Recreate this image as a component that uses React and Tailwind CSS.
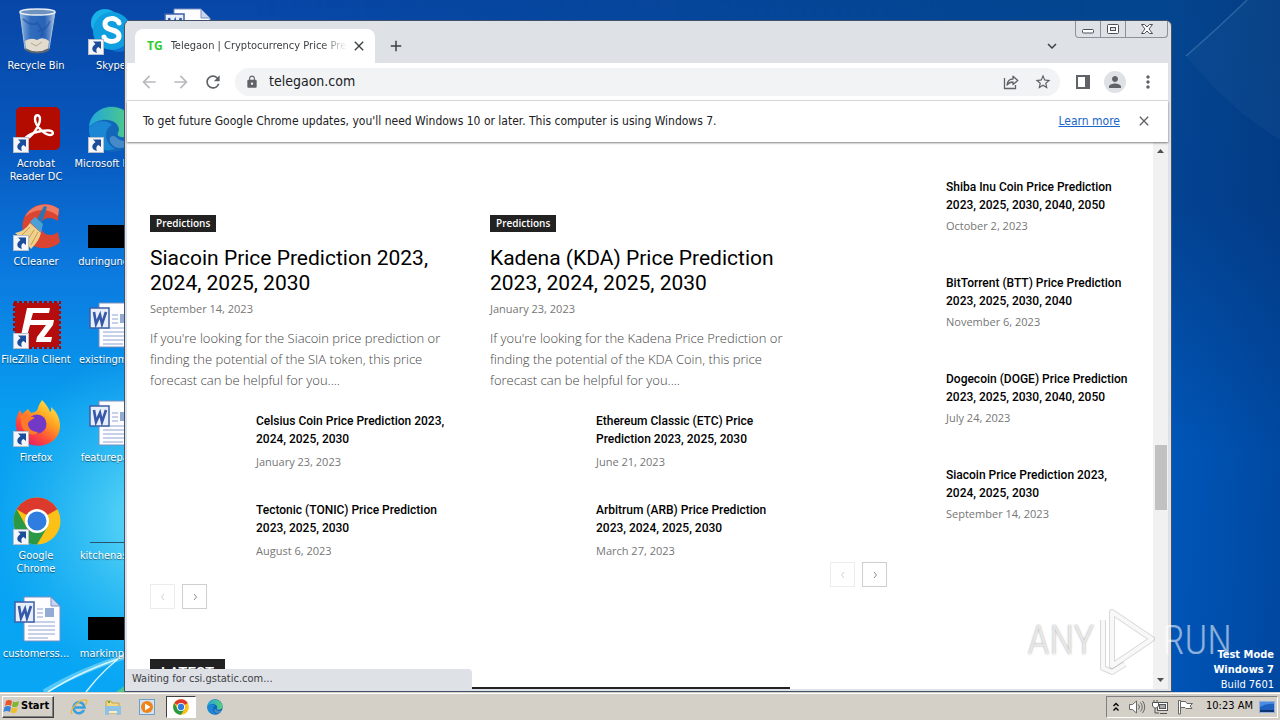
import React from 'react';
import {
  MdAdd,
  MdArrowBack,
  MdArrowForward,
  MdClose,
  MdExpandMore,
  MdLock,
  MdMoreVert,
  MdPerson,
  MdRefresh,
  MdStarBorder,
} from 'react-icons/md';

// --- DATA ---
const featured = [
  {
    title: 'Siacoin Price Prediction 2023, 2024, 2025, 2030',
    date: 'September 14, 2023',
    excerpt:
      "If you're looking for the Siacoin price prediction or finding the potential of the SIA token, this price forecast can be helpful for you....",
    related: [
      { title: 'Celsius Coin Price Prediction 2023, 2024, 2025, 2030', date: 'January 23, 2023' },
      { title: 'Tectonic (TONIC) Price Prediction 2023, 2025, 2030', date: 'August 6, 2023' },
    ],
  },
  {
    title: 'Kadena (KDA) Price Prediction 2023, 2024, 2025, 2030',
    date: 'January 23, 2023',
    excerpt:
      "If you're looking for the Kadena Price Prediction or finding the potential of the KDA Coin, this price forecast can be helpful for you....",
    related: [
      { title: 'Ethereum Classic (ETC) Price Prediction 2023, 2025, 2030', date: 'June 21, 2023' },
      { title: 'Arbitrum (ARB) Price Prediction 2023, 2024, 2025, 2030', date: 'March 27, 2023' },
    ],
  },
];

const sidebarPosts = [
  { title: 'Shiba Inu Coin Price Prediction 2023, 2025, 2030, 2040, 2050', date: 'October 2, 2023' },
  { title: 'BitTorrent (BTT) Price Prediction 2023, 2025, 2030, 2040', date: 'November 6, 2023' },
  { title: 'Dogecoin (DOGE) Price Prediction 2023, 2025, 2030, 2040, 2050', date: 'July 24, 2023' },
  { title: 'Siacoin Price Prediction 2023, 2024, 2025, 2030', date: 'September 14, 2023' },
];

// --- DESKTOP ICONS ---
function RecycleBinIcon() {
  return (
    <svg viewBox="0 0 48 48" className="h-12 w-12">
      <defs>
        <linearGradient id="bin" x1="0" x2="1">
          <stop offset="0" stopColor="#b9d3ee" stopOpacity=".85" />
          <stop offset=".3" stopColor="#4d83c9" stopOpacity=".6" />
          <stop offset=".7" stopColor="#3f74be" stopOpacity=".6" />
          <stop offset="1" stopColor="#c6d8ea" stopOpacity=".9" />
        </linearGradient>
      </defs>
      <path d="M7 5 L12 42 Q24 49 36 42 L42 5 Z" fill="url(#bin)" stroke="#a9bfd8" strokeWidth="1" />
      <path d="M12 34 q6 -4 12 -1 q6 -4 12 1 l-1 8 q-11 6 -22 0 z" fill="#e2dccf" />
      <path d="M12 41 Q24 48 36 41 L36 44 Q24 49 13 44 Z" fill="#5d6670" />
      <path d="M18 36 l5 3 l6 -4" stroke="#b9a98d" fill="none" />
      <path d="M10 12 q9 8 14 4 q8 8 4 14 M37 14 q-4 10 -12 10" fill="none" stroke="#1c52a8" strokeWidth="2" opacity=".6" />
      <ellipse cx="24.500" cy="5" rx="17.500" ry="3" fill="#6f93be" stroke="#e7eef5" strokeWidth="1.500" />
    </svg>
  );
}

function AcrobatIcon() {
  return (
    <svg viewBox="0 0 48 48" className="h-12 w-12">
      <rect x="3" y="2" width="44" height="43" rx="5" fill="#b30b00" />
      <path
        d="M12 34 C19 33 27 20 27 14 C27 9 22 9 22 14 C22 21 32 30 37 30 C41 30 41 26 36 25.500 C28 25 14 29 12 34 Z"
        fill="none"
        stroke="#fff"
        strokeWidth="2.400"
        strokeLinejoin="round"
      />
    </svg>
  );
}

function CCleanerIcon() {
  return (
    <svg viewBox="0 0 48 48" className="h-12 w-12">
      <path
        d="M46 6 C34 -3 15 1 10 18 C7 33 16 45 31 45 C38 45 43 43 47 39 L45 29 C40 34 29 33 28 24 C27 15 37 12 45 18 Z"
        fill="#db4430"
      />
      <path d="M46 6 C34 -3 17 2 12 14 C22 5 35 5 45 13 Z" fill="#ef7a63" />
      <path d="M31 3 L34 4 L28 22 L22 20 Z" fill="#2876b4" />
      <path d="M17 19 L22 14 L30 21 L28 30 Z" fill="#4ba0d6" />
      <path d="M17 20 L28 30 Q26 38 18 46 Q10 36 2 30 Q12 28 17 20 Z" fill="#efd08d" />
      <path d="M17 24 L9 32 M21 27 L14 38 M25 29 L18 42" stroke="#c99b4b" />
    </svg>
  );
}

function FileZillaIcon() {
  return (
    <svg viewBox="0 0 48 48" className="h-12 w-12">
      <rect x="2" y="2" width="44" height="44" fill="#b50d0d" />
      <rect x="1" y="1" width="46" height="46" fill="none" stroke="#a20808" strokeWidth="2" strokeDasharray="3 2" />
      <path d="M14 7 H37 L36 12 H20 L18 19 H29 L28 24 H17 L13 39 H7 Z" fill="#fff" />
      <path d="M24 19 H41 L40 24 L31 36 H39 L38 41 H23 L24 36 L33 24 H23 Z" fill="#fff" />
    </svg>
  );
}

function FirefoxIcon() {
  return (
    <svg viewBox="0 0 48 48" className="h-12 w-12">
      <defs>
        <linearGradient id="fox" x1=".9" y1="0" x2=".2" y2="1">
          <stop offset="0" stopColor="#fff44f" />
          <stop offset=".4" stopColor="#ffa01f" />
          <stop offset=".7" stopColor="#ff4a3c" />
          <stop offset="1" stopColor="#e01470" />
        </linearGradient>
      </defs>
      <path
        d="M29 1 C34 6 36 10 37 13 C39 12 38 9 38 8 C49 17 50 33 41 41 C31 50 14 48 7 38 C0 28 3 17 7 11 L9 15 L15 10 L18 14 C23 13 24 12 25 9 C26 5 28 3 29 1 Z"
        fill="url(#fox)"
      />
      <circle cx="24" cy="25" r="9.500" fill="#7139c6" />
      <path d="M7 17 C11 15 15 18 21 18 C23 20 15 21 15 25 C15 30 20 33 25 33 C22 38 12 35 9 28 Z" fill="#ff7a28" />
    </svg>
  );
}

function ChromeLogo({ className }) {
  return (
    <svg viewBox="0 0 48 48" className={className}>
      <circle cx="24" cy="24" r="23.500" fill="#fbc116" />
      <path d="M24 24 L3.600 12.300 A23.500 23.500 0 0 1 44.400 12.300 Z" fill="#dc3a2c" />
      <path d="M3.600 12.300 A23.500 23.500 0 0 0 24 47.500 L34.400 30 L24 34 L13.600 30 Z" fill="#2b9846" />
      <circle cx="24" cy="24" r="12" fill="#fff" />
      <circle cx="24" cy="24" r="9.500" fill="#2f7de1" />
    </svg>
  );
}

function SkypeIcon() {
  return (
    <svg viewBox="0 0 48 48" className="h-12 w-12">
      <circle cx="17" cy="16" r="14" fill="#18b2e8" />
      <circle cx="31" cy="32" r="13" fill="#0a6fd0" />
      <circle cx="24" cy="24" r="19" fill="#0f9fe0" />
      <path
        d="M31 16 C29 10 17 10 17 17 C17 25 31 21 31 29 C31 36 18 36 16 30"
        fill="none"
        stroke="#fff"
        strokeWidth="5"
        strokeLinecap="round"
      />
    </svg>
  );
}

function EdgeLogo({ className }) {
  return (
    <svg viewBox="0 0 48 48" className={className}>
      <defs>
        <linearGradient id="edge" x1="0" x2="1">
          <stop offset="0" stopColor="#22a5dd" />
          <stop offset="1" stopColor="#55d178" />
        </linearGradient>
      </defs>
      <circle cx="24" cy="24" r="23" fill="#1267b8" />
      <path d="M1 22 C3 -2 38 -6 46 18 C49 28 40 33 33 32 C28 31 30 28 31 25 C31 14 12 10 1 22 Z" fill="url(#edge)" />
      <path d="M1 23 C8 14 20 15 24 20 C16 24 15 37 27 44 C12 49 0 37 1 23 Z" fill="#1b86d4" />
      <path d="M46 33 C40 37 32 37 28 32 C22 28 18 36 27 42 C35 45 43 40 46 33 Z" fill="#e9f4fb" opacity=".25" />
    </svg>
  );
}

function WordDocIcon() {
  return (
    <svg viewBox="0 0 48 48" className="h-12 w-12">
      <path d="M11 2 H38 L47 11 V46 H11 Z" fill="#fdfdff" stroke="#7b8fc0" />
      <path d="M38 2 V11 H47 Z" fill="#c9d5ee" stroke="#7b8fc0" />
      <path d="M24 14 H30 M24 18 H30 M24 22 H30 M15 27 H42 M15 31 H42 M15 35 H42 M15 39 H42 M15 43 H35" stroke="#8fa3d3" />
      <rect x="32" y="13" width="9" height="9" fill="#93abd3" />
      <rect x="2" y="7" width="19" height="20" fill="#e8effa" stroke="#3d5fa8" strokeWidth="1.500" />
      <path d="M6 11 L8 23 L12 14 L14 23 L18 11" fill="none" stroke="#3559a8" strokeWidth="2.600" />
    </svg>
  );
}

function BlackThumb() {
  return (
    <svg viewBox="0 0 48 48" className="h-12 w-12">
      <rect x="0" y="22" width="48" height="23" fill="#000" />
    </svg>
  );
}

function LineThumb() {
  return (
    <svg viewBox="0 0 48 48" className="h-12 w-12">
      <path d="M2 45.500 H48" stroke="#27566b" />
    </svg>
  );
}

function ShortcutArrow() {
  return (
    <svg viewBox="0 0 16 16" className="absolute bottom-0 left-0 h-4 w-4">
      <rect x=".5" y=".5" width="15" height="15" fill="#f4f6f9" stroke="#b8bec8" />
      <path d="M5 2.500 H13 V10 L10.500 8 C8 9 8 11.500 9 14 C3 12.500 3 8 7.500 5 Z" fill="#1b4d9b" />
    </svg>
  );
}

const desktopIcons = [
  { label: 'Recycle Bin', icon: <RecycleBinIcon /> },
  { label: 'Acrobat Reader DC', icon: <AcrobatIcon />, shortcut: true },
  { label: 'CCleaner', icon: <CCleanerIcon />, shortcut: true },
  { label: 'FileZilla Client', icon: <FileZillaIcon />, shortcut: true },
  { label: 'Firefox', icon: <FirefoxIcon />, shortcut: true },
  { label: 'Google Chrome', icon: <ChromeLogo className="h-12 w-12" />, shortcut: true },
  { label: 'customerss...', icon: <WordDocIcon /> },
  { label: 'Skype', icon: <SkypeIcon />, shortcut: true },
  { label: 'Microsoft\u00a0Edge', icon: <EdgeLogo className="h-12 w-12" />, shortcut: true },
  { label: 'duringunca...', icon: <BlackThumb /> },
  { label: 'existingma...', icon: <WordDocIcon /> },
  { label: 'featurepar...', icon: <WordDocIcon /> },
  { label: 'kitchenass...', icon: <LineThumb /> },
  { label: 'markimple...', icon: <BlackThumb /> },
  { label: '', icon: <WordDocIcon /> },
];

function Wallpaper() {
  return (
    <svg className="absolute inset-0 h-full w-full" viewBox="0 0 1280 692" preserveAspectRatio="none" aria-hidden="true">
      <defs>
        <linearGradient id="sky" x1="0" y1="0" x2="0" y2="1">
          <stop offset="0" stopColor="#0846a6" />
          <stop offset=".2" stopColor="#0757bd" />
          <stop offset=".4" stopColor="#0b7be0" />
          <stop offset=".6" stopColor="#089ff0" />
          <stop offset="1" stopColor="#08a6f4" />
        </linearGradient>
        <linearGradient id="east" x1="0" y1="0" x2="0" y2="1">
          <stop offset="0" stopColor="#04458f" />
          <stop offset=".3" stopColor="#034393" />
          <stop offset=".65" stopColor="#0056b8" />
          <stop offset="1" stopColor="#0054b6" />
        </linearGradient>
        <linearGradient id="fade" x1="0" x2="1">
          <stop offset=".2" stopColor="#fff" stopOpacity="0" />
          <stop offset=".85" stopColor="#fff" />
        </linearGradient>
        <mask id="eastMask">
          <rect width="1280" height="692" fill="url(#fade)" />
        </mask>
        <radialGradient id="glow" gradientUnits="userSpaceOnUse" cx="160" cy="520" r="170">
          <stop offset="0" stopColor="#6ee2f6" />
          <stop offset="1" stopColor="#3cc6f4" stopOpacity="0" />
        </radialGradient>
        <linearGradient id="edgeShade" gradientUnits="userSpaceOnUse" x1="1172" y1="0" x2="1280" y2="0">
          <stop offset="0" stopColor="#00235e" stopOpacity="0" />
          <stop offset="1" stopColor="#00235e" stopOpacity=".25" />
        </linearGradient>
      </defs>
      <rect width="1280" height="692" fill="url(#sky)" />
      <rect width="1280" height="692" fill="url(#east)" mask="url(#eastMask)" />
      <rect width="340" height="692" fill="url(#glow)" />
      <rect x="1172" width="108" height="692" fill="url(#edgeShade)" />
      <path d="M1186 56 Q1216 30 1247 0 H1280 V140 Q1230 110 1186 56 Z" fill="#5b8fb0" opacity=".08" />
      <path d="M1186 56 Q1216 30 1247 0" fill="none" stroke="#7fb0dc" strokeWidth="1.500" opacity=".3" />
      <path d="M44 692 Q80 670 130 655" fill="none" stroke="#9fe9fb" strokeWidth="5" opacity=".5" />
      <path d="M48 692 Q82 670 130 655 M86 692 Q104 668 130 650" fill="none" stroke="#e6fbff" strokeWidth="1.500" opacity=".9" />
      <path d="M116 692 L130 682 V692 Z" fill="#4fc68c" />
    </svg>
  );
}

function DesktopIcon({ item }) {
  return (
    <button type="button" className="flex h-[98px] w-[72px] flex-col items-center pt-[7px]">
      <span className="relative ml-[2px] block h-12 w-12">
        {item.icon}
        {item.shortcut && <ShortcutArrow />}
      </span>
      <span className="mt-1 text-center text-[11px] leading-[13px] text-white [text-shadow:0_1px_1px_rgba(0,0,0,0.5)]">
        {item.label}
      </span>
    </button>
  );
}

// --- BROWSER ---
function WindowControls() {
  return (
    <div className="flex h-[17px] rounded-b border border-t-0 border-[#8d9199] text-[#4b4f58]">
      <button type="button" aria-label="Minimize" className="flex w-[25px] items-center justify-center border-r border-[#8d9199]">
        <svg viewBox="0 0 14 10" className="h-[10px] w-[14px]">
          <rect x="1.500" y="5.500" width="11" height="3.500" rx="1" fill="#fff" stroke="currentColor" />
        </svg>
      </button>
      <button type="button" aria-label="Maximize" className="flex w-[25px] items-center justify-center border-r border-[#8d9199]">
        <svg viewBox="0 0 12 10" className="h-[10px] w-[12px]">
          <rect x=".5" y=".5" width="11" height="9" rx="1" fill="#fff" stroke="currentColor" />
          <rect x="3.500" y="3.500" width="5" height="3" fill="#dee1e6" stroke="currentColor" />
        </svg>
      </button>
      <button type="button" aria-label="Close" className="flex w-[41px] items-center justify-center">
        <svg viewBox="0 0 12 10" className="h-[10px] w-[12px]">
          <path
            d="M.5 .5 H3.500 L6 3 L8.500 .5 H11.500 L8 5 L11.500 9.500 H8.500 L6 7 L3.500 9.500 H.5 L4 5 Z"
            fill="#fff"
            stroke="currentColor"
          />
        </svg>
      </button>
    </div>
  );
}

function TabStrip() {
  return (
    <div className="flex h-[42px] items-start bg-[#dee1e6]">
      <div className="mt-2 ml-2 flex h-[34px] w-60 items-center rounded-t-lg bg-white pr-2 pl-3">
        <span className="font-['Open_Sans',sans-serif] text-[12px] font-bold text-[#2fcc2f]">TG</span>
        <span className="ml-2 flex-1 overflow-hidden text-[11px] whitespace-nowrap text-[#3c4043] [mask-image:linear-gradient(to_right,black_85%,transparent)]">
          Telegaon | Cryptocurrency Price Prediction
        </span>
        <button type="button" aria-label="Close tab" className="ml-1 text-[#3c4043]">
          <MdClose className="h-4 w-4" />
        </button>
      </div>
      <button type="button" aria-label="New tab" className="mt-4 ml-3 text-[#3c4043]">
        <MdAdd className="h-[18px] w-[18px]" />
      </button>
      <div className="flex-1" />
      <button type="button" aria-label="Search tabs" className="mt-4 mr-[14px] text-[#3c4043]">
        <MdExpandMore className="h-[18px] w-[18px]" />
      </button>
      <WindowControls />
    </div>
  );
}

function Toolbar() {
  return (
    <div className="flex h-[38px] items-center border-b border-[#dcdde0] bg-white pr-[10px] pl-3 text-[#5f6368]">
      <button type="button" aria-label="Back" className="text-[#b9bbbe]">
        <MdArrowBack className="h-5 w-5" />
      </button>
      <button type="button" aria-label="Forward" className="ml-3 text-[#b9bbbe]">
        <MdArrowForward className="h-5 w-5" />
      </button>
      <button type="button" aria-label="Reload" className="ml-3">
        <MdRefresh className="h-5 w-5" />
      </button>
      <div className="ml-3 flex h-7 flex-1 items-center rounded-full bg-[#f1f3f4] pr-2 pl-[10px]">
        <MdLock className="h-[14px] w-[14px]" />
        <input
          type="text"
          aria-label="Address"
          defaultValue="telegaon.com"
          className="ml-[10px] min-w-0 flex-1 bg-transparent text-[14px] text-[#202124] outline-none"
        />
        <button type="button" aria-label="Share this page">
          <svg viewBox="0 0 18 18" className="h-[18px] w-[18px]" fill="none" stroke="currentColor" strokeWidth="1.300">
            <path d="M2.500 5 V15.500 H13.500 V12" />
            <path d="M5 12 C5.500 8 8 6 11 6 V3.200 L15.800 7.500 L11 11.500 V9 C8.500 9 6.500 10 5 12 Z" strokeLinejoin="round" />
          </svg>
        </button>
        <button type="button" aria-label="Bookmark this tab" className="ml-[14px]">
          <MdStarBorder className="h-[18px] w-[18px]" />
        </button>
      </div>
      <button type="button" aria-label="Side panel" className="ml-4">
        <svg viewBox="0 0 14 14" className="h-[14px] w-[14px]">
          <rect x="1" y="1" width="12" height="12" fill="#fff" stroke="currentColor" strokeWidth="2" />
          <rect x="9" y="1" width="4" height="12" fill="currentColor" />
        </svg>
      </button>
      <button type="button" aria-label="Profile" className="ml-[14px] flex h-[22px] w-[22px] items-center justify-center rounded-full bg-[#dee1e6]">
        <MdPerson className="h-[18px] w-[18px]" />
      </button>
      <button type="button" aria-label="Menu" className="ml-3">
        <MdMoreVert className="h-5 w-5" />
      </button>
    </div>
  );
}

function InfoBar() {
  return (
    <div className="relative z-10 flex h-[41px] items-center bg-white pr-4 pb-[2px] pl-4 text-[12px] text-[#202124] shadow-[0_1px_2px_rgba(0,0,0,0.5)]">
      <p className="flex-1">
        To get future Google Chrome updates, you'll need Windows 10 or later. This computer is using Windows 7.
      </p>
      <a href="#learn" className="text-[#1a66c8] underline">
        Learn more
      </a>
      <button type="button" aria-label="Dismiss" className="ml-4 text-[#5f6368]">
        <MdClose className="h-4 w-4" />
      </button>
    </div>
  );
}

// --- PAGE ---
function PostTitle({ children }) {
  return (
    <h3 className="font-['Roboto',sans-serif] text-[12px] leading-[18px] font-medium text-black">
      <a href="#post">{children}</a>
    </h3>
  );
}

function Pager() {
  return (
    <div className="flex gap-[7px]">
      <button
        type="button"
        aria-label="Previous page"
        disabled
        className="flex h-[25px] w-[25px] items-center justify-center border border-[#ececec] text-[#d0d0d0]"
      >
        <svg viewBox="0 0 8 8" className="h-2 w-2" fill="none" stroke="currentColor">
          <path d="M5 1 L2.500 4 L5 7" />
        </svg>
      </button>
      <button
        type="button"
        aria-label="Next page"
        className="flex h-[25px] w-[25px] items-center justify-center border border-[#cfcfcf] text-[#8a8a8a]"
      >
        <svg viewBox="0 0 8 8" className="h-2 w-2" fill="none" stroke="currentColor">
          <path d="M3 1 L5.500 4 L3 7" />
        </svg>
      </button>
    </div>
  );
}

function FeaturedColumn({ post }) {
  return (
    <div className="flex-1">
      <a href="#predictions" className="block w-fit bg-[#222] px-[6px] text-[10px] leading-[17px] font-semibold text-white">
        Predictions
      </a>
      <h3 className="mt-[14px] font-['Roboto',sans-serif] text-[21px] leading-[25px] text-black">
        <a href="#post">{post.title}</a>
      </h3>
      <time className="mt-[3px] block text-[11px] leading-5 text-[#767676]">{post.date}</time>
      <p className="mt-[9px] text-[13px] leading-[21px] font-light text-[#444]">{post.excerpt}</p>
      <div className="mt-[21px] flex flex-col gap-[29px] pl-[106px]">
        {post.related.map((item) => (
          <article key={item.title}>
            <PostTitle>{item.title}</PostTitle>
            <time className="mt-1 block text-[11px] leading-5 text-[#767676]">{item.date}</time>
          </article>
        ))}
      </div>
    </div>
  );
}

function Page() {
  return (
    <main className="min-w-0 flex-1 overflow-hidden bg-white font-['Open_Sans',sans-serif]">
      <div className="mx-auto flex max-w-[980px] gap-10">
        <section className="flex-1 pt-[73px]">
          <div className="flex gap-10">
            {featured.map((post) => (
              <FeaturedColumn key={post.title} post={post} />
            ))}
          </div>
          <div className="mt-[23px]">
            <Pager />
          </div>
          <h4 className="mt-[50px] border-b-2 border-[#222]">
            <span className="block w-fit bg-[#222] px-[11px] font-['Roboto',sans-serif] text-[15px] leading-7 font-medium text-white">
              LATEST
            </span>
          </h4>
        </section>
        <aside className="w-[300px] pt-9">
          {sidebarPosts.map((post) => (
            <article key={post.title} className="h-24 pl-[116px]">
              <PostTitle>{post.title}</PostTitle>
              <time className="mt-[2px] block text-[11px] leading-5 text-[#767676]">{post.date}</time>
            </article>
          ))}
          <Pager />
        </aside>
      </div>
    </main>
  );
}

function Scrollbar() {
  return (
    <div className="flex w-[15px] flex-col items-center bg-[#f1f1f1] text-[#505050]">
      <svg viewBox="0 0 15 16" className="h-4 w-[15px]">
        <path d="M4 11 L7.500 7 L11 11 Z" fill="currentColor" />
      </svg>
      <div className="flex-[286]" />
      <div className="w-3 flex-[65] bg-[#c1c1c1]" />
      <div className="flex-[162]" />
      <svg viewBox="0 0 15 16" className="h-4 w-[15px]">
        <path d="M4 5 L7.500 9 L11 5 Z" fill="currentColor" />
      </svg>
    </div>
  );
}

function BrowserWindow() {
  return (
    <div className="absolute top-5 right-[108px] bottom-0 left-[124px] flex flex-col rounded-t-md border border-[#43526b] bg-[#dee1e6] pr-[3px] pb-[2px] pl-[2px]">
      <TabStrip />
      <Toolbar />
      <InfoBar />
      <div className="relative flex min-h-0 flex-1">
        <Page />
        <Scrollbar />
        <div className="absolute bottom-0 left-0 w-[345px] rounded-tr bg-[#dee1e6] px-[5px] text-[11px] leading-5 text-[#3c4043]">
          Waiting for csi.gstatic.com...
        </div>
      </div>
    </div>
  );
}

function Watermark() {
  return (
    <div className="pointer-events-none absolute right-12 bottom-4 flex items-center font-['Roboto_Condensed','Roboto',sans-serif] text-[40px] leading-[70px] font-light">
      <span className="text-white/70 [text-shadow:0_0_2px_rgba(0,0,0,0.4)]">ANY</span>
      <svg viewBox="0 0 64 70" className="h-[70px] w-16" fill="none" strokeLinejoin="round">
        <g stroke="#000" strokeOpacity=".15" strokeWidth="6">
          <path d="M17 6 L57 33 L17 60 Z" />
          <path d="M8 14 V62 L17 66 L30 58" />
        </g>
        <g stroke="#fff" strokeOpacity=".8" strokeWidth="4">
          <path d="M17 6 L57 33 L17 60 Z" />
          <path d="M8 14 V62 L17 66 L30 58" />
        </g>
      </svg>
      <span className="ml-1 text-white/55">RUN</span>
    </div>
  );
}

// --- TASKBAR ---
function FlagLogo() {
  return (
    <svg viewBox="0 0 18 16" className="h-4 w-[18px]">
      <path d="M3 2 Q6 0 9 2 L8 7 Q5 5 2 7 Z" fill="#e8542c" />
      <path d="M10 2.500 Q13 4 16 2 L15 7 Q12 9 9 7.500 Z" fill="#7db536" />
      <path d="M1.500 8 Q5 6 8 8 L7 13 Q4 11 .5 13 Z" fill="#3b83d6" />
      <path d="M8.700 8.500 Q12 10 14.700 8 L13.600 13 Q11 15 7.700 13.500 Z" fill="#f2bd2a" />
    </svg>
  );
}

function ExplorerIcon() {
  return (
    <svg viewBox="0 0 18 18" className="h-[18px] w-[18px]">
      <path d="M2 3 H7 L8 5 H15 V15 H2 Z" fill="#f3d780" stroke="#c9a545" />
      <rect x="4" y="3" width="2" height="2" fill="#5fae4c" />
      <path d="M1 8 H17 V17 H13 V13 H5 V17 H1 Z" fill="#8fc3e6" />
      <path d="M5 13 H13 V15 H5 Z" fill="#f8edc6" />
    </svg>
  );
}

function IeIcon() {
  return (
    <svg viewBox="0 0 18 18" className="h-[18px] w-[18px]" fill="none">
      <path d="M14 12 A5.500 5.500 0 1 1 14.500 9.500 H5" stroke="#39a0e0" strokeWidth="2.600" />
      <path d="M2 16 C-1 12 9 1 16 2 C18 3 16 6 15 7" stroke="#edb933" strokeWidth="1.400" />
    </svg>
  );
}

function PlayerIcon() {
  return (
    <svg viewBox="0 0 18 18" className="h-[18px] w-[18px]">
      <rect x="1.500" y="1.500" width="15" height="15" fill="#cfe3f4" stroke="#6d9fc9" />
      <circle cx="9" cy="9" r="6" fill="#f08318" />
      <path d="M7 5.500 L12.500 9 L7 12.500 Z" fill="#fff" />
    </svg>
  );
}

function Taskbar() {
  return (
    <footer className="flex h-7 items-center border-t border-[#d4d0c8] bg-[#d4d0c8] px-[2px] shadow-[inset_0_1px_0_#fff]">
      <button
        type="button"
        className="flex h-[22px] w-[52px] items-center border border-t-white border-r-[#404040] border-b-[#404040] border-l-white text-[11px] font-bold text-black shadow-[inset_-1px_-1px_0_#808080]"
      >
        <FlagLogo />
        Start
      </button>
      <div className="ml-[10px] flex items-center gap-1">
        <button type="button" aria-label="Internet Explorer" className="flex h-[22px] w-[30px] items-center justify-center">
          <IeIcon />
        </button>
        <button type="button" aria-label="Windows Explorer" className="flex h-[22px] w-[30px] items-center justify-center">
          <ExplorerIcon />
        </button>
        <button type="button" aria-label="Media Player" className="flex h-[22px] w-[30px] items-center justify-center">
          <PlayerIcon />
        </button>
        <button
          type="button"
          aria-label="Google Chrome"
          className="flex h-[22px] w-[30px] items-center justify-center border border-t-[#404040] border-r-white border-b-white border-l-[#404040] bg-white"
        >
          <ChromeLogo className="h-4 w-4" />
        </button>
        <button type="button" aria-label="Microsoft Edge" className="flex h-[22px] w-[30px] items-center justify-center">
          <EdgeLogo className="h-4 w-4" />
        </button>
      </div>
      <div className="flex-1" />
      <div className="flex h-[22px] items-center border border-t-[#808080] border-r-white border-b-white border-l-[#808080] pr-[2px] pl-[5px]">
        <button type="button" aria-label="Show hidden icons">
          <svg viewBox="0 0 8 10" className="h-[10px] w-2" fill="none" stroke="#000" strokeWidth="1.400">
            <path d="M1.500 4 L4 1.500 L6.500 4 M1.500 8.500 L4 6 L6.500 8.500" />
          </svg>
        </button>
        <svg viewBox="0 0 18 16" className="ml-2 h-4 w-[18px]" fill="#fff" stroke="#666">
          <path d="M1.500 5.500 H4.500 L8.500 2 V14 L4.500 10.500 H1.500 Z" />
          <path d="M10.500 5.500 Q12.500 8 10.500 10.500 M12.500 3.500 Q16 8 12.500 12.500 M14.500 2 Q19 8 14.500 14" fill="none" />
        </svg>
        <svg viewBox="0 0 17 16" className="ml-[6px] h-4 w-[17px]" stroke="#555">
          <rect x="5.500" y="3.500" width="10" height="8" fill="#fff" />
          <rect x="7.500" y="5.500" width="6" height="4" fill="#aaa" />
          <path d="M8 14.500 H15 M3 9 V14 H7" fill="none" />
          <path d="M.5 3.500 H6.500 V7 L4.500 9 H2.500 L.5 7 Z M2 1 V3 M5 1 V3" fill="#fff" />
        </svg>
        <svg viewBox="0 0 17 16" className="ml-2 h-4 w-[17px]" fill="#fff" stroke="#666">
          <path d="M1.500 1.500 H3.500 V15 H1.500 Z" />
          <path d="M3.500 2.500 H8.500 L10 4.500 H15.500 L13 7 L15 9.500 H9 L8 8.500 H3.500 Z" />
        </svg>
        <span className="ml-3 text-[11px] text-black">10:23 AM</span>
        <button type="button" aria-label="Show desktop" className="ml-[6px]">
          <svg viewBox="0 0 16 14" className="h-[14px] w-4">
            <rect x=".5" y="1.500" width="15" height="11" fill="#1f5fbe" stroke="#8eaede" />
            <path d="M1 7 Q8 3 15 4 V2 H1 Z" fill="#4b8be0" />
            <rect x="1" y="10" width="14" height="2" fill="#0d3371" />
          </svg>
        </button>
      </div>
    </footer>
  );
}

export default function App() {
  return (
    <div className="flex h-screen flex-col overflow-hidden font-['Tahoma','DejaVu_Sans_Condensed','Noto_Sans',sans-serif]">
      <div className="relative min-h-0 flex-1">
        <Wallpaper />
        <div className="relative grid w-fit grid-flow-col grid-rows-7 gap-x-[3px]">
          {desktopIcons.map((item, index) => (
            <DesktopIcon key={index} item={item} />
          ))}
        </div>
        <div className="absolute right-[6px] bottom-0 text-right text-[11px] leading-[15px] text-white">
          <p className="font-bold">Test Mode</p>
          <p className="font-bold">Windows 7</p>
          <p>Build 7601</p>
        </div>
        <BrowserWindow />
        <Watermark />
      </div>
      <Taskbar />
    </div>
  );
}
